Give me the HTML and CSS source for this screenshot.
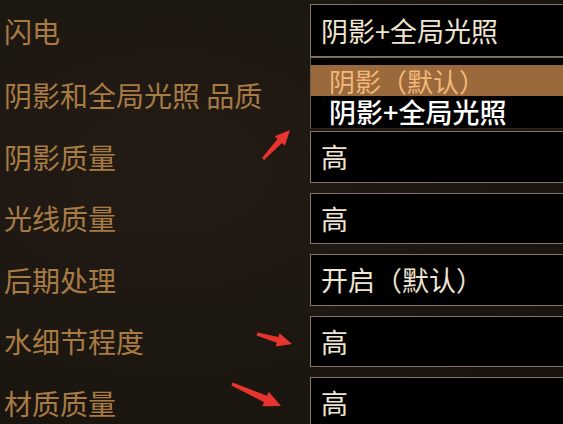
FILE: index.html
```html
<!DOCTYPE html>
<html lang="zh-CN">
<head>
<meta charset="utf-8">
<title>设置</title>
<link rel="stylesheet" href="styles.css">
</head>
<body>
<div class="screen">
  <div class="list">
    <div class="row r1"><div class="label">闪电</div><div class="box">阴影+全局光照</div></div>
    <div class="row r2"><div class="label">阴影和全局光照 品质</div><div class="box"></div></div>
    <div class="row"><div class="label">阴影质量</div><div class="box">高</div></div>
    <div class="row"><div class="label">光线质量</div><div class="box">高</div></div>
    <div class="row"><div class="label">后期处理</div><div class="box">开启（默认）</div></div>
    <div class="row"><div class="label">水细节程度</div><div class="box">高</div></div>
    <div class="row"><div class="label">材质质量</div><div class="box">高</div></div>
  </div>
  <div class="dropdown">
    <div class="opt sel">阴影（默认）</div>
    <div class="opt">阴影+全局光照</div>
  </div>
  <svg class="arrows" width="563" height="424" viewBox="0 0 563 424">
    <polygon points="261.9,158 277.6,139 274.7,136.2 290,130 284.9,145.8 282,143 264.1,160"/>
    <polygon points="257.4,332.6 278.4,337 279.5,333.2 292,344 275.7,346.6 276.8,342.8 256.6,335.4"/>
    <polygon points="232.6,382.6 266.9,395.8 268.8,391.7 281,406 262.2,406.3 264.1,402.2 231.4,385.4"/>
  </svg>
</div>
</body>
</html>
```
FILE: styles.css
```css
html, body {
  margin: 0;
  padding: 0;
}
body {
  width: 563px;
  height: 424px;
  overflow: hidden;
  background: #1d1712;
  font-family: "Noto Sans CJK SC", "Noto Sans", sans-serif;
}
.screen {
  position: relative;
  width: 563px;
  height: 424px;
  overflow: hidden;
  background: radial-gradient(ellipse at 30% 40%, #231c15 0%, #1b1510 70%, #17120e 100%);
}
.list {
  padding-top: 4px;
}
.row {
  display: grid;
  grid-template-columns: 310px 1fr;
  height: 51.5px;
  margin-bottom: 10px;
}
.row.r1 {
  height: 53px;
  margin-bottom: 12.5px;
}
.label {
  display: flex;
  align-items: center;
  padding-left: 4px;
  font-size: 28px;
  font-weight: 400;
  color: #a87b44;
  white-space: nowrap;
}
.box {
  display: flex;
  align-items: center;
  box-sizing: border-box;
  margin-right: -20px;
  padding-left: 10px;
  border: 1px solid #857464;
  background: #000;
  color: #efe4d0;
  font-size: 27px;
  white-space: nowrap;
}
.dropdown {
  position: absolute;
  left: 310px;
  top: 57px;
  width: 280px;
  height: 72px;
  box-sizing: border-box;
  padding-top: 7px;
  background: #000;
  border-left: 1px solid #6b5a4a;
  border-top: 1px solid #7a6a5a;
  border-bottom: 1px solid #2e2620;
}
.opt {
  height: 31px;
  line-height: 31px;
  padding-left: 18px;
  font-size: 26px;
  color: #ffffff;
  white-space: nowrap;
}
.opt.sel {
  background: #9a6a3c;
  color: #f3b779;
}
.opt + .opt {
  font-weight: 500;
  font-size: 27px;
}
.arrows {
  position: absolute;
  left: 0;
  top: 0;
  pointer-events: none;
}
.arrows polygon {
  fill: #e8342f;
}
```
